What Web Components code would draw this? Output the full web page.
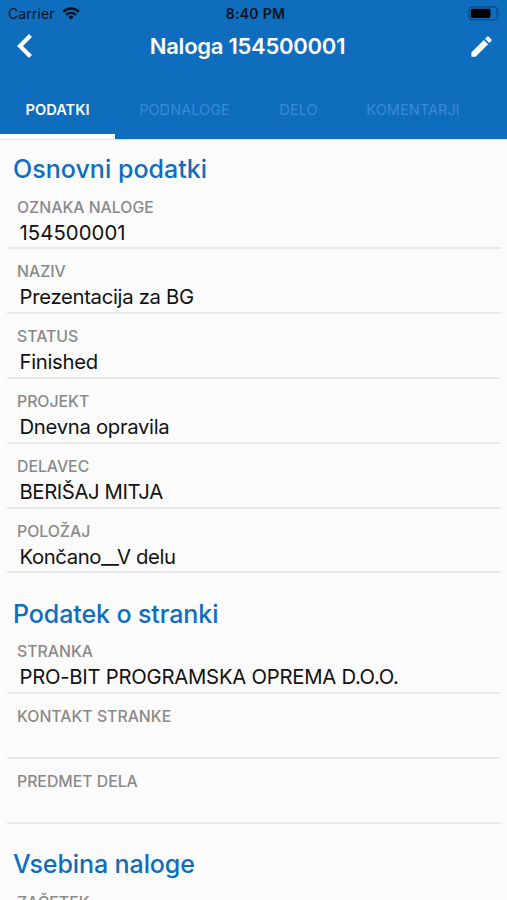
<!DOCTYPE html>
<html lang="sl">
<head>
<meta charset="utf-8">
<title>Naloga 154500001</title>
<style>
html, body {
  margin: 0;
  height: 100%;
}
body {
  overflow: hidden;
  font-family: Inter, "Liberation Sans", sans-serif;
  background: #fbfbfb;
}
</style>
</head>
<body>
<task-screen>
  <status-bar slot="header" carrier="Carrier">8:40 PM</status-bar>
  <nav-bar slot="header">Naloga 154500001</nav-bar>
  <tab-bar slot="header">
    <tab-item style="width: 115px" active>PODATKI</tab-item>
    <tab-item style="width: 139px">PODNALOGE</tab-item>
    <tab-item style="width: 89px">DELO</tab-item>
    <tab-item style="width: 140px">KOMENTARJI</tab-item>
  </tab-bar>

  <field-group heading="Osnovni podatki" style="--heading-spacing: 0.03px">
    <data-field label="OZNAKA NALOGE" style="--value-spacing: 0.07px">154500001</data-field>
    <data-field label="NAZIV">Prezentacija za BG</data-field>
    <data-field label="STATUS">Finished</data-field>
    <data-field label="PROJEKT">Dnevna opravila</data-field>
    <data-field label="DELAVEC" style="--value-spacing: -0.4px">BERIŠAJ MITJA</data-field>
    <data-field label="POLOŽAJ" style="--value-spacing: -0.4px">Končano__V delu</data-field>
  </field-group>
  <field-group heading="Podatek o stranki">
    <data-field label="STRANKA" style="--value-spacing: -0.25px">PRO-BIT PROGRAMSKA OPREMA D.O.O.</data-field>
    <data-field label="KONTAKT STRANKE"></data-field>
    <data-field label="PREDMET DELA"></data-field>
  </field-group>
  <field-group heading="Vsebina naloge">
    <data-field label="ZAČETEK"></data-field>
  </field-group>
</task-screen>

<script>
class TaskScreen extends HTMLElement {
  constructor() {
    super()
    const shadow = this.attachShadow({mode: 'open'})
    shadow.innerHTML = `
<style>
:host {
  display: flex;
  flex-direction: column;
  width: 507px;
  height: 900px;
  overflow: hidden;
}
header {
  flex: none;
  box-sizing: border-box;
  height: 139px;
  background: #0e6dbd;
}
main {
  flex: 1;
  min-height: 0;
  overflow: hidden;
  box-sizing: border-box;
  border-top: 1px solid #d5e3ef;
}
</style>
<header><slot name="header"></slot></header>
<main><slot></slot></main>
`
  }
}
customElements.define('task-screen', TaskScreen)

class StatusBar extends HTMLElement {
  constructor() {
    super()
    const shadow = this.attachShadow({mode: 'open'})
    shadow.innerHTML = `
<style>
:host {
  display: grid;
  grid-template-columns: 1fr auto 1fr;
  align-items: center;
  box-sizing: border-box;
  height: 27px;
  padding: 0 6px 0 8px;
  color: #04121f;
  font-size: 14px;
}
.left {
  display: flex;
  align-items: center;
  gap: 7px;
}
#carrier {
  letter-spacing: 0.1px;
}
.time {
  padding-left: 2px;
  font-weight: 600;
  letter-spacing: 0.3px;
}
.battery {
  justify-self: end;
}
svg {
  display: block;
}
</style>
<div class="left">
  <span id="carrier"></span>
  <svg width="18" height="13" viewBox="0 0 18 13" fill="none" stroke="currentColor" stroke-width="2.4">
    <path d="M1.2 4.8 A11 11 0 0 1 16.8 4.8"/>
    <path d="M4 8 A7 7 0 0 1 14 8"/>
    <path d="M9 12.6 L6.4 9.9 A3.7 3.7 0 0 1 11.6 9.9 Z" fill="currentColor" stroke="none"/>
  </svg>
</div>
<span class="time"><slot></slot></span>
<svg class="battery" width="33" height="15" viewBox="0 0 33 15">
  <rect x="0.9" y="0.9" width="28.4" height="13" rx="3.4" fill="none" stroke="#084a84" stroke-width="1.2"/>
  <rect x="2.8" y="2.8" width="19.6" height="9.2" rx="1.4" fill="#000"/>
  <path d="M30.6 5.2 Q32.6 7.4 30.6 9.6 Z" fill="#084a84"/>
</svg>
`
  }
  connectedCallback() {
    this.shadowRoot.querySelector('#carrier').textContent = this.getAttribute('carrier')
  }
}
customElements.define('status-bar', StatusBar)

class NavBar extends HTMLElement {
  constructor() {
    super()
    const shadow = this.attachShadow({mode: 'open'})
    shadow.innerHTML = `
<style>
:host {
  display: grid;
  grid-template-columns: 40px 1fr 40px;
  align-items: center;
  box-sizing: border-box;
  height: 54px;
  padding: 0 12px 15px 15px;
  color: #fff;
}
h1 {
  margin: 0;
  padding: 0 15px 1px 0;
  text-align: center;
  font-size: 22px;
  line-height: 28px;
  font-weight: 600;
  letter-spacing: -0.25px;
  white-space: nowrap;
}
svg {
  display: block;
}
.back {
  padding-bottom: 2px;
}
.edit {
  justify-self: end;
}
</style>
<svg class="back" width="20" height="26" viewBox="0 0 20 26" fill="none" stroke="currentColor" stroke-width="4.2">
  <path d="M15.5 2.4 L5 12.9 L15.5 23.4"/>
</svg>
<h1><slot></slot></h1>
<svg class="edit" width="27" height="27" viewBox="0 0 24 24" fill="currentColor">
  <path d="M3 17.25V21h3.75L17.81 9.94l-3.75-3.75L3 17.25zM20.71 7.04a1 1 0 0 0 0-1.41l-2.34-2.34a1 1 0 0 0-1.41 0l-1.83 1.83 3.75 3.75 1.83-1.83z"/>
</svg>
`
  }
}
customElements.define('nav-bar', NavBar)

class TabBar extends HTMLElement {
  constructor() {
    super()
    const shadow = this.attachShadow({mode: 'open'})
    shadow.innerHTML = `
<style>
:host {
  display: flex;
  height: 58px;
}
</style>
<slot></slot>
`
  }
}
customElements.define('tab-bar', TabBar)

class TabItem extends HTMLElement {
  constructor() {
    super()
    const shadow = this.attachShadow({mode: 'open'})
    shadow.innerHTML = `
<style>
:host {
  display: flex;
  flex: none;
  align-items: center;
  justify-content: center;
  box-sizing: border-box;
  border-bottom: 5px solid transparent;
  padding-top: 4px;
  color: #3a8ad8;
  font-size: 14.6px;
  line-height: 18px;
  white-space: nowrap;
}
:host([active]) {
  border-bottom-color: #fff;
  color: #fff;
  font-weight: 600;
}
</style>
<slot></slot>
`
  }
}
customElements.define('tab-item', TabItem)

class FieldGroup extends HTMLElement {
  constructor() {
    super()
    const shadow = this.attachShadow({mode: 'open'})
    shadow.innerHTML = `
<style>
:host {
  display: block;
  padding: 25.4px 6px 0 7px;
}
:host(:first-of-type) {
  padding-top: 14px;
}
h2 {
  margin: 0 0 0.6px 6px;
  color: #0e6dbd;
  font-size: 25px;
  line-height: 30px;
  font-weight: 500;
  letter-spacing: var(--heading-spacing, -0.1px);
}
</style>
<h2></h2>
<slot></slot>
`
  }
  connectedCallback() {
    this.shadowRoot.querySelector('h2').textContent = this.getAttribute('heading')
  }
}
customElements.define('field-group', FieldGroup)

class DataField extends HTMLElement {
  constructor() {
    super()
    const shadow = this.attachShadow({mode: 'open'})
    shadow.innerHTML = `
<style>
:host {
  display: flex;
  flex-direction: column;
  box-sizing: border-box;
  height: 64.8px;
  padding-top: 13px;
  border-bottom: 2px solid #e9e9e9;
}
label {
  padding-left: 10px;
  color: #8a8a8a;
  font-size: 15.8px;
  line-height: 20px;
  font-weight: 450;
}
.value {
  padding-left: 12.5px;
  color: #111;
  font-size: 20.3px;
  line-height: 30px;
  letter-spacing: var(--value-spacing, -0.3px);
  white-space: nowrap;
}
</style>
<label></label>
<div class="value"><slot></slot></div>
`
  }
  connectedCallback() {
    this.shadowRoot.querySelector('label').textContent = this.getAttribute('label')
  }
}
customElements.define('data-field', DataField)
</script>
</body>
</html>
